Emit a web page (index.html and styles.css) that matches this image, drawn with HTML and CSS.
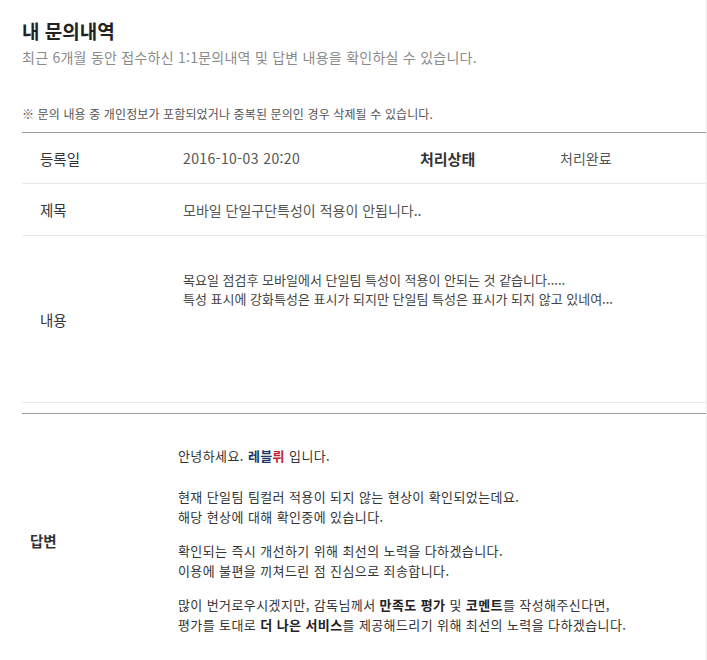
FILE: index.html
```html
<!DOCTYPE html>
<html lang="ko">
<head>
<meta charset="utf-8">
<link rel="stylesheet" href="styles.css">
</head>
<body>
<div class="page">
  <h1 class="title">내 문의내역</h1>
  <p class="subtitle">최근 6개월 동안 접수하신 1:1문의내역 및 답변 내용을 확인하실 수 있습니다.</p>
  <p class="note">※ 문의 내용 중 개인정보가 포함되었거나 중복된 문의인 경우 삭제될 수 있습니다.</p>

  <div class="table">
    <div class="row row-meta">
      <div class="label">등록일</div>
      <div class="value date">2016-10-03 20:20</div>
      <div class="label2">처리상태</div>
      <div class="value status">처리완료</div>
    </div>
    <div class="row row-subject">
      <div class="label">제목</div>
      <div class="value">모바일 단일구단특성이 적용이 안됩니다..</div>
    </div>
    <div class="row row-body">
      <div class="label">내용</div>
      <div class="value body-text">
        <p>목요일 점검후 모바일에서 단일팀 특성이 적용이 안되는 것 같습니다.....</p>
        <p>특성 표시에 강화특성은 표시가 되지만 단일팀 특성은 표시가 되지 않고 있네여...</p>
      </div>
    </div>
  </div>

  <div class="answer">
    <div class="label answer-label">답변</div>
    <div class="answer-text">
      <p class="greet">안녕하세요. <b class="navy">레블</b><b class="red">뤼</b> 입니다.</p>
      <p>현재 단일팀 팀컬러 적용이 되지 않는 현상이 확인되었는데요.<br>해당 현상에 대해 확인중에 있습니다.</p>
      <p>확인되는 즉시 개선하기 위해 최선의 노력을 다하겠습니다.<br>이용에 불편을 끼쳐드린 점 진심으로 죄송합니다.</p>
      <p>많이 번거로우시겠지만, 감독님께서 <b>만족도 평가</b> 및 <b>코멘트</b>를 작성해주신다면,<br>평가를 토대로 <b>더 나은 서비스</b>를 제공해드리기 위해 최선의 노력을 다하겠습니다.</p>
    </div>
  </div>
</div>
</body>
</html>
```

FILE: styles.css
```css
html, body {
  margin: 0;
  padding: 0;
  background: #ffffff;
}

body {
  font-family: "Noto Sans CJK KR", "Noto Sans", sans-serif;
  color: #333333;
}

.page {
  padding: 18px 0 0 22px;
  border-right: 1px solid #ececec;
  min-height: 660px;
  box-sizing: border-box;
}

.title {
  margin: 0;
  font-size: 19px;
  line-height: 26px;
  font-weight: 700;
  color: #222222;
}

.subtitle {
  margin: 0;
  font-size: 14px;
  line-height: 26px;
  letter-spacing: 0.25px;
  color: #8a8a8a;
}

.note {
  margin: 36px 0 0;
  font-size: 12px;
  line-height: 16px;
  letter-spacing: 0.12px;
  color: #555555;
}

.table {
  margin-top: 10px;
  border-top: 1px solid #9a9a9a;
}

.row {
  display: flex;
  align-items: center;
  border-bottom: 1px solid #e8e8e8;
}

.row-meta { height: 50px; }
.row-subject { height: 51px; }
.row-body { height: 166px; }

.label {
  width: 143px;
  padding-left: 18px;
  font-size: 14.5px;
  color: #333333;
  flex-shrink: 0;
}

.value {
  font-size: 14px;
  color: #555555;
}

.date {
  width: 237px;
  letter-spacing: 0.4px;
}

.label2 {
  width: 140px;
  font-size: 15px;
  font-weight: 700;
  color: #333333;
}

.body-text {
  font-size: 13px;
  color: #444444;
  align-self: flex-start;
  padding-top: 34px;
}

.body-text p {
  margin: 0;
  line-height: 19px;
}

.answer {
  margin-top: 10px;
  border-top: 1px solid #9a9a9a;
  display: flex;
  align-items: center;
  padding: 32px 0 30px;
}

.answer-label {
  width: 148px;
  padding-left: 8px;
  font-weight: 700;
}

.answer-text {
  font-size: 13px;
  letter-spacing: 0.4px;
  color: #333333;
}

.answer-text p {
  margin: 0 0 14px;
  line-height: 20px;
}

.answer-text p.greet {
  margin-bottom: 21px;
}

.answer-text p:last-child {
  margin-bottom: 0;
}

.answer-text b {
  font-weight: 700;
  color: #222222;
}

.answer-text b.navy { color: #1d3866; }
.answer-text b.red { color: #c2232b; }
```
